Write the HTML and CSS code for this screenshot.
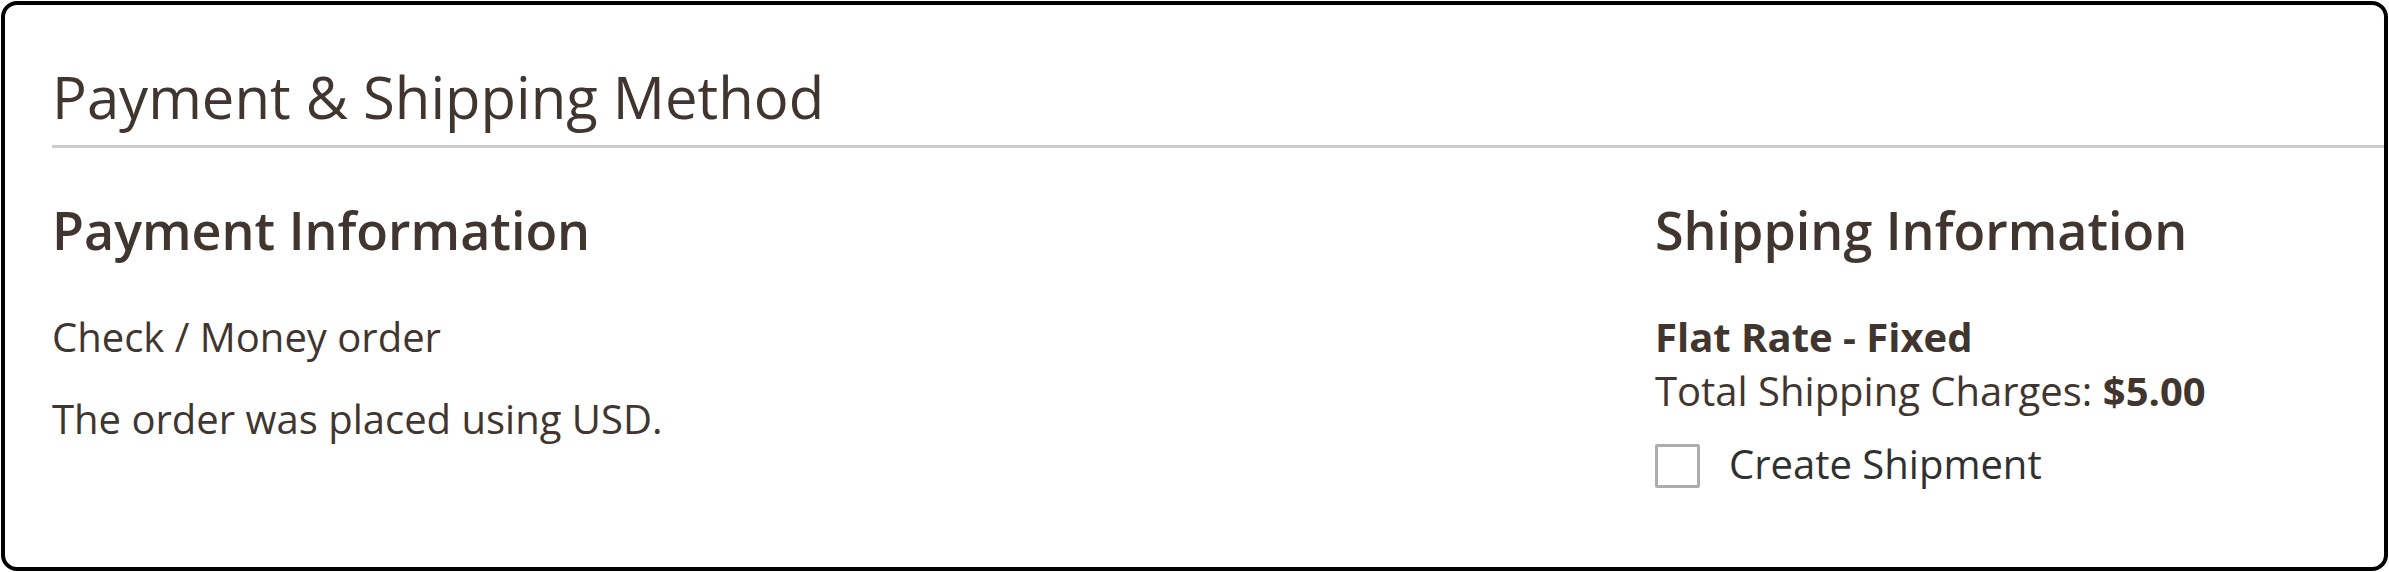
FILE: index.html
```html
<!DOCTYPE html>
<html lang="en">
<head>
    <meta charset="UTF-8">
    <title>Payment &amp; Shipping Method</title>
    <link rel="stylesheet" href="styles.css">
</head>
<body>
    <section class="section-card">
        <h2 class="section-title">Payment &amp; Shipping Method</h2>
        <div class="section-columns">
            <div class="order-payment">
                <h3 class="item-title">Payment Information</h3>
                <p class="item-text">Check / Money order</p>
                <p class="item-text item-note">The order was placed using USD.</p>
            </div>
            <div class="order-shipping">
                <h3 class="item-title">Shipping Information</h3>
                <div class="shipping-method">
                    <strong>Flat Rate - Fixed</strong>
                    <div>Total Shipping Charges: <strong>$5.00</strong></div>
                </div>
                <label class="create-shipment">
                    <span class="checkbox"></span>
                    <span>Create Shipment</span>
                </label>
            </div>
        </div>
    </section>
</body>
</html>
```

FILE: styles.css
```css
body {
    margin: 0;
    background-color: #fff;
    font-family: 'Open Sans', 'Liberation Sans', sans-serif;
    color: #41362f;
}
.section-card {
    margin: 1px;
    height: 562px;
    padding-left: 47px;
    border: 4px solid #000;
    border-radius: 16px;
    overflow: hidden;
}
.section-title {
    margin: 0;
    padding: 52px 0 8px;
    font-size: 58px;
    font-weight: 400;
    line-height: 80px;
    border-bottom: 3px solid #ccc;
}
.section-columns {
    display: grid;
    grid-template-columns: 1603px 1fr;
    margin-top: 46px;
}
.item-title {
    margin: 0;
    font-size: 52px;
    font-weight: 600;
    line-height: 72px;
}
.item-text {
    margin: 44px 0 0;
    font-size: 40px;
    line-height: 1.36;
}
.item-note {
    margin-top: 28px;
}
.shipping-method {
    margin-top: 44px;
    font-size: 40px;
    line-height: 1.36;
}
.shipping-method strong {
    font-weight: 700;
}
.create-shipment {
    display: flex;
    align-items: flex-start;
    gap: 29px;
    margin-top: 18px;
    font-size: 40px;
    line-height: 1.36;
    color: #303030;
}
.checkbox {
    width: 39px;
    height: 38px;
    margin-top: 7px;
    border: 3px solid #adadad;
    border-radius: 2px;
}
```
